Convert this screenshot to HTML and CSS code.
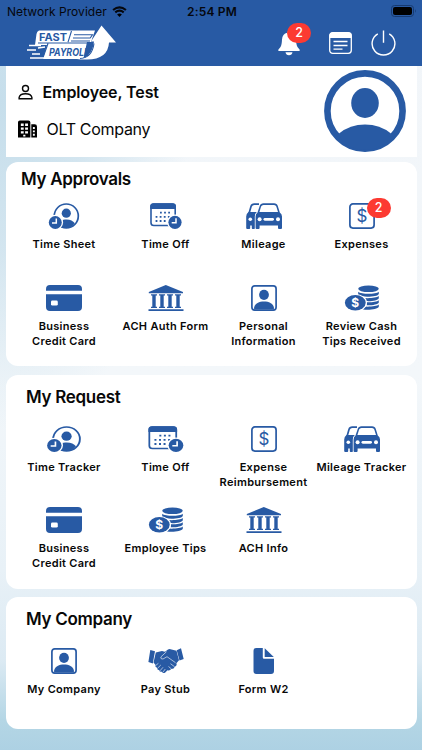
FILE: index.html
```html
<!DOCTYPE html>
<html lang="en">
<head>
  <meta charset="UTF-8">
  <meta name="viewport" content="width=device-width, initial-scale=1">
  <title>Fast Payroll</title>
  <link rel="stylesheet" href="styles.css">
</head>
<body>

  <!-- icon set -->
  <svg class="sprite" xmlns="http://www.w3.org/2000/svg">
    <symbol id="timesheet" viewBox="0 0 36 26" preserveAspectRatio="none">
      <circle cx="20.3" cy="13" r="12" fill="none" stroke="currentColor" stroke-width="1.7"/>
      <circle cx="20.3" cy="10.2" r="4.6"/>
      <path d="M11 24.5V21c2-3.400 5.500-4.500 9.500-4.500s6.500 1.300 8.300 3.800C27 23.500 24 25 20.300 25z"/>
      <circle cx="9.300" cy="19.500" r="7.800" fill="#fff"/>
      <circle cx="9.300" cy="19.500" r="6.500"/>
      <path d="M10.300 15.500v4.400H6" fill="none" stroke="#fff" stroke-width="1.500"/>
    </symbol>
    <symbol id="timeoff" viewBox="0 0 36 26" preserveAspectRatio="none">
      <rect x="3" y="1" width="24.200" height="21.500" rx="2.800" fill="#fff" stroke="currentColor" stroke-width="1.600"/>
      <path d="M2.200 6V3.500Q2.200.2 5.500.2h19Q28 .2 28 3.500V6z"/>
      <g stroke="currentColor" stroke-width="1.800" stroke-dasharray="1.800 2.300">
        <path d="M12 9.600h11M7.600 13.800h15.500M7.600 18h11"/>
      </g>
      <circle cx="27" cy="19.300" r="7.900" fill="#fff"/>
      <circle cx="27" cy="19.300" r="6.600"/>
      <path d="M28 15.300v4.400h-4.300" fill="none" stroke="#fff" stroke-width="1.500"/>
    </symbol>
    <symbol id="cars" viewBox="0 0 36 26">
      <path d="M3 10.500 5 3.500Q5.800 1.200 8.300 1.200H13" fill="none" stroke="currentColor" stroke-width="1.700"/>
      <path d="M2.500 9h9L9 13v12.200q0 .8-1 .8H6.600q-.8 0-.8-1v-2.500h-1.600V25q0 1-1 1H1.200q-1 0-1-1V13.500Q.2 10.500 2.500 9z"/>
      <circle cx="4.300" cy="16.200" r="1.800" fill="#fff"/>
      <path d="M11.500 9.500 13.700 3Q14.500.2 17.500.2H28q3 0 3.800 2.800l2 6.500q2.200 1.500 2.200 4V25q0 1-1 1h-2q-1 0-1-1v-2.500H13.600V25q0 1-1 1h-2q-1 0-1-1V13.500q0-2.500 1.900-4z" stroke="#fff" stroke-width="1.600" paint-order="stroke"/>
      <path d="M13.400 9l1.700-5.400Q15.700 2 17.500 2H28q1.800 0 2.300 1.600L32 9z" fill="#fff"/>
      <circle cx="13.600" cy="16.300" r="2" fill="#fff"/>
      <circle cx="32" cy="16.300" r="2" fill="#fff"/>
      <rect x="17.500" y="14.900" width="10.500" height="2.800" rx="1.400" fill="#fff"/>
    </symbol>
    <symbol id="expense" viewBox="0 0 36 26">
      <rect x="5.900" y=".9" width="24.200" height="24.200" rx="3" fill="none" stroke="currentColor" stroke-width="1.700"/>
      <text x="18" y="19" class="dollar">$</text>
    </symbol>
    <symbol id="creditcard" viewBox="0 0 36 26">
      <path d="M0 5.800V4Q0 0 4 0h28q4 0 4 4v1.800zM0 9.200h36V22q0 4-4 4H4q-4 0-4-4z"/>
      <rect x="5" y="15.600" width="6.800" height="5" rx="1.400" fill="#fff"/>
    </symbol>
    <symbol id="bank" viewBox="0 0 36 26">
      <path d="M17.800 0 35 7v1.300H.8V7zM3 9.200h6v1.300H7.700v11.300H9v1.300H3v-1.300h1.300V10.500H3zM11 9.200h6v1.300h-1.300v11.300H17v1.300h-6v-1.300h1.300V10.500H11zM19 9.200h6v1.300h-1.300v11.300H25v1.300h-6v-1.300h1.300V10.500H19zM27 9.200h6v1.300h-1.300v11.300H33v1.300h-6v-1.300h1.300V10.500H27zM.5 24.300h35V26H.5z"/>
    </symbol>
    <symbol id="person" viewBox="0 0 36 26">
      <rect x="5.900" y=".9" width="24.200" height="24.200" rx="2.800" fill="none" stroke="currentColor" stroke-width="1.700"/>
      <ellipse cx="18" cy="9.800" rx="4.900" ry="5.100"/>
      <path d="M8.100 24.500v-2c1-4.300 5-6 9.900-6s9 1.700 9.900 6v2z"/>
    </symbol>
    <symbol id="coins" viewBox="0 0 36 26">
      <ellipse cx="24.500" cy="3.800" rx="10.300" ry="3.300"/>
      <path d="M14.200 6.700c3 2.700 17.600 2.700 20.600 0V9c-1 3-17.500 4.200-20.600.6zM18 12.700c6 1 14.500.2 16.800-1.700v2.200c-1 2.200-7 3.300-12.800 2.900zM22.500 17.300c5 .2 10.500-.4 12.300-2v2.200c-1 2-6.500 3-12.300 2.800zM21 21.600c6 .3 12.200-.5 13.800-2.100v2.300c-1.200 2.600-9.800 3.600-15.800 2.700z"/>
      <ellipse cx="11.500" cy="17.700" rx="11.500" ry="8.800" fill="#fff"/>
      <ellipse cx="11.300" cy="17.700" rx="10.400" ry="7.700"/>
      <text x="11.300" y="22" class="coin">$</text>
    </symbol>
    <symbol id="hands" viewBox="0 0 36 26">
      <path d="M2.300 2 7 3.300 4.800 15.500.4 14zM28.700 2.300 33 .3l2.700 10.800-4.200 1.400z"/>
      <path d="M7.800 4.500 14 3l3 .8L20 1.500q1-.6 2.500-.3l6 1.500 2.500 9.600-2.600 2.900q1 2.300-1.600 3.500-.8 2.300-3.600 2.200-1.200 2-3.700 1.300l-2.500 2.500q-2 1-3.100-1-2.200.5-2.700-1.500-2.300-.3-2.100-2.500-2.300-.5-1.500-2.700l-2.100-2.400z"/>
      <path d="M18.500 3.700 12.800 9q-.2 2.500 2.200 2l4-2.300 8.500 6M7.700 17.500l2.700-2.200M9.600 20.200l3.200-3.200M12 22.800l3-3.500M15 24l2.300-3M20.500 18.500l3 2.500M22.500 15.700l4 3" fill="none" stroke="#fff" stroke-width=".6"/>
    </symbol>
    <symbol id="file" viewBox="0 0 36 26">
      <path d="M10.500 0h6.300v9.500q0 1.200 1.200 1.200h10V23q0 3-3 3H10.500q-3 0-3-3V3q0-3 3-3z"/>
      <path d="M18.700.3 27.800 9h-9.100z"/>
    </symbol>
  </svg>

  <header class="topbar">
    <div class="status">
      <div class="carrier">
        <span>Network Provider</span>
        <svg class="wifi" viewBox="0 0 16 12">
          <path d="M8 12 5.400 9.200q2.600-2 5.200 0z"/>
          <path d="M3.400 7q4.600-3.800 9.200 0M1 4.400q7-6 14 0" fill="none" stroke="#05070d" stroke-width="2.300"/>
        </svg>
      </div>
      <span class="clock">2:54 PM</span>
      <svg class="battery" viewBox="0 0 26 12">
        <rect x=".5" y=".5" width="22" height="11" rx="3" fill="none" stroke="#173a70"/>
        <rect x="2" y="2" width="19" height="8" rx="2"/>
        <path d="M24 4q1.600 2 0 4z" fill="#173a70"/>
      </svg>
    </div>

    <div class="toolbar">
      <svg class="logo" viewBox="0 0 90 36">
        <path fill="#fff" d="M12 5.500h56L64 17h-4l-3 14Q57 34 53 34H16l4-14H8l1.500-11Q10 6 12 5.500z"/>
        <path fill="#fff" d="M50 34.500q15-1 17-18h-3L74.500.5 89 17.500h-7Q81 34.500 60 34.500z"/>
        <path d="M44.500 6 41 17.200M11 18h54.500M21 18.500 15.500 34M67 18.500Q65 33 53 33.500" fill="none" stroke="#285aa4" stroke-width="1.100"/>
        <path d="M47 9.700h18.500l-2.300 3.300H46M44 16h19" fill="none" stroke="#285aa4" stroke-width="1.100"/>
        <path d="M2 20.500h12M0 25h9M5 29h8M3 33h14M11 23l7-1" fill="none" stroke="#fff" stroke-width="1.500"/>
        <text x="12" y="15.500" textLength="28" lengthAdjust="spacingAndGlyphs" class="logo-text">FAST</text>
        <text x="22" y="30.500" textLength="40" lengthAdjust="spacingAndGlyphs" class="logo-text slanted">PAYROLL</text>
      </svg>
      <div class="actions">
        <div class="bell">
          <svg viewBox="0 0 22 26">
            <path d="M11 1q1.700 0 1.700 1.800 5 1.200 5.300 6.700.2 5.500 1.500 7.500l2.200 2.700q.5 1.300-.8 1.300H1.100Q-.2 21 .3 19.700L2.500 17Q3.800 15 4 9.500 4.300 4 9.300 2.800 9.300 1 11 1zM7.500 22.300h7Q14 25.300 11 25.300T7.500 22.300z" fill="#fff"/>
          </svg>
          <span class="badge">2</span>
        </div>
        <svg class="news" viewBox="0 0 23 22">
          <rect x=".7" y=".7" width="21.600" height="20.600" rx="3" fill="none" stroke="#fff" stroke-width="1.300"/>
          <path d="M.5 6V3.500Q.5.5 3.500.5h16q3 0 3 3V6z" fill="#fff"/>
          <path d="M4.500 9.500h14M4.500 13.500h14M4.500 17.200h9" stroke="#fff" stroke-width="1.300"/>
        </svg>
        <svg class="power" viewBox="0 0 25 26">
          <path d="M12.500.5v12.300M6.800 3.800a11.400 11.400 0 1 0 11.400 0" fill="none" stroke="#fff" stroke-width="1.400"/>
        </svg>
      </div>
    </div>
  </header>

  <main>
    <section class="profile">
      <div class="who">
        <div class="name">
          <svg viewBox="0 0 16 16"><circle cx="8" cy="4.300" r="3.200"/><path d="M1.200 15.200v-1.400q.8-4 6.800-4t6.800 4v1.400z"/></svg>
          <b>Employee, Test</b>
        </div>
        <div class="company">
          <svg viewBox="0 0 20 18">
            <path d="M0 18V2q0-2 2-2h9q2 0 2 2v16zM14 4h3.500Q20 4 20 6.500V18h-6z"/>
            <path d="M3 3.300h3v2.500H3zM7.500 3.300h3v2.500h-3zM3 7.300h3v2.500H3zM7.500 7.300h3v2.500h-3zM3 11.300h3v2.500H3zM7.500 11.300h3v2.500h-3zM5.500 15h2.300v2H5.500zM15.700 7h2v2h-2zM15.700 10.500h2v2h-2zM15.700 14h2v2h-2z" fill="#fff"/>
          </svg>
          <span>OLT Company</span>
        </div>
      </div>
      <svg class="avatar" viewBox="0 0 82 82">
        <circle cx="41" cy="41" r="37.600" fill="none" stroke="#285aa4" stroke-width="6.600"/>
        <ellipse cx="41" cy="33" rx="13.800" ry="15"/>
        <path d="M15 63.500q11-9 26-9t26 9L62 73q-10 7-21 7T19 73z"/>
      </svg>
    </section>

    <section class="card approvals">
      <h2>My Approvals</h2>
      <div class="grid">
        <div class="item"><svg><use href="#timesheet"/></svg><p>Time Sheet</p></div>
        <div class="item"><svg><use href="#timeoff"/></svg><p>Time Off</p></div>
        <div class="item"><svg><use href="#cars"/></svg><p>Mileage</p></div>
        <div class="item"><svg><use href="#expense"/></svg><span class="badge">2</span><p>Expenses</p></div>
        <div class="item"><svg><use href="#creditcard"/></svg><p>Business<br>Credit Card</p></div>
        <div class="item"><svg><use href="#bank"/></svg><p>ACH Auth Form</p></div>
        <div class="item"><svg><use href="#person"/></svg><p>Personal<br>Information</p></div>
        <div class="item"><svg><use href="#coins"/></svg><p>Review Cash<br>Tips Received</p></div>
      </div>
    </section>

    <section class="card request">
      <h2>My Request</h2>
      <div class="grid">
        <div class="item"><svg class="wide"><use href="#timesheet"/></svg><p>Time Tracker</p></div>
        <div class="item"><svg class="wide"><use href="#timeoff"/></svg><p>Time Off</p></div>
        <div class="item"><svg><use href="#expense"/></svg><p>Expense<br>Reimbursement</p></div>
        <div class="item"><svg><use href="#cars"/></svg><p>Mileage Tracker</p></div>
        <div class="item"><svg><use href="#creditcard"/></svg><p>Business<br>Credit Card</p></div>
        <div class="item"><svg><use href="#coins"/></svg><p>Employee Tips</p></div>
        <div class="item"><svg><use href="#bank"/></svg><p>ACH Info</p></div>
      </div>
    </section>

    <section class="card my-company">
      <h2>My Company</h2>
      <div class="grid">
        <div class="item"><svg><use href="#person"/></svg><p>My Company</p></div>
        <div class="item"><svg><use href="#hands"/></svg><p>Pay Stub</p></div>
        <div class="item"><svg><use href="#file"/></svg><p>Form W2</p></div>
      </div>
    </section>
  </main>

</body>
</html>
```
FILE: styles.css
```css
* {
  box-sizing: border-box;
}
body {
  margin: 0;
  height: 750px;
  overflow: hidden;
  font-family: Inter, "Liberation Sans", sans-serif;
  color: #080808;
  background:
    radial-gradient(ellipse 190px 330px at 0 100px, #c6deeb 0%, rgba(198,222,235,0.7) 45%, rgba(198,222,235,0) 100%),
    linear-gradient(180deg, #f1f5f9 0%, #f3f7fa 50%, #e8f1f7 76%, #dceaf3 88%, #b4d6e5 96%, #add1e3 100%);
}
.sprite {
  display: none;
}
svg {
  display: block;
  flex: none;
}
.topbar {
  height: 65.5px;
  background: #285aa4;
}
.status {
  height: 22px;
  display: grid;
  grid-template-columns: 1fr auto 1fr;
  align-items: center;
  padding: 0 5px 0 7px;
  font-size: 12px;
  color: #05070d;
}
.carrier {
  display: flex;
  align-items: center;
  gap: 5px;
  letter-spacing: 0.05px;
}
.wifi {
  width: 15px;
  height: 11px;
}
.clock {
  font-weight: 600;
  letter-spacing: 0.2px;
}
.battery {
  width: 26px;
  height: 12px;
  justify-self: end;
}
.toolbar {
  display: flex;
  justify-content: space-between;
  padding: 2px 26px 0 27px;
}
.logo {
  width: 90px;
  height: 36px;
  margin-top: 1px;
}
.logo-text {
  font-family: Inter, sans-serif;
  font-size: 10.5px;
  font-weight: 700;
  fill: #285aa4;
}
.slanted {
  font-style: italic;
}
.actions {
  display: flex;
  align-items: center;
  gap: 19px;
}
.bell {
  position: relative;
  margin-right: 10px;
}
.bell svg {
  width: 22px;
  height: 26px;
}
.news {
  width: 23px;
  height: 22px;
}
.power {
  width: 25px;
  height: 26px;
}
.badge {
  position: absolute;
  width: 24px;
  height: 20px;
  border-radius: 10px;
  background: #fc3a32;
  color: #fff;
  font-size: 12.5px;
  font-weight: 500;
  line-height: 19px;
  text-align: center;
}
.bell .badge {
  left: 9px;
  top: -7px;
}
main {
  padding: 0 5.5px;
}
.profile {
  display: flex;
  justify-content: space-between;
  height: 91.5px;
  padding: 4.5px 10.5px 0 12px;
  background: #fff;
}
.name, .company {
  display: flex;
  align-items: center;
  height: 20px;
  gap: 10px;
  font-size: 16px;
}
.name {
  margin-top: 11.5px;
}
.name b {
  font-weight: 600;
  letter-spacing: -0.1px;
}
.name svg {
  width: 15px;
  height: 16px;
  fill: none;
  stroke: #080808;
  stroke-width: 1.5;
}
.company {
  margin-top: 17px;
  letter-spacing: -0.3px;
}
.company svg {
  width: 19px;
  height: 18px;
}
.avatar {
  width: 82px;
  height: 82px;
  fill: #285aa4;
}
.card {
  background: #fff;
  border-radius: 12px;
}
.approvals {
  height: 204px;
  margin-top: 5px;
  padding-top: 6px;
}
.request {
  height: 214px;
  margin-top: 8.5px;
  padding-top: 11px;
}
.my-company {
  height: 132px;
  margin-top: 8.5px;
  padding-top: 11px;
}
h2 {
  margin: 0 0 0 20.5px;
  height: 22px;
  line-height: 22px;
  font-size: 17px;
  font-weight: 600;
  letter-spacing: -0.3px;
}
.approvals h2 {
  margin-left: 15.5px;
}
.grid {
  display: grid;
  grid-template-columns: 105px 98px 98px 98px;
  grid-auto-rows: 81.5px;
  padding: 18px 0 0 6px;
}
.approvals .grid {
  padding-top: 13px;
}
.item {
  position: relative;
  display: flex;
  flex-direction: column;
  align-items: center;
}
.item svg {
  width: 36px;
  height: 26px;
  color: #285aa4;
  fill: #285aa4;
}
.item .wide {
  width: 40px;
}
.item p {
  margin: 8px 0 0;
  font-size: 11px;
  font-weight: 600;
  line-height: 15.3px;
  letter-spacing: 0.3px;
  text-align: center;
  white-space: nowrap;
}
.item .badge {
  left: 54px;
  top: -5px;
}
.dollar, .coin {
  font-family: Inter, sans-serif;
  font-size: 17px;
  text-anchor: middle;
}
.coin {
  font-size: 12px;
  font-weight: 700;
  fill: #fff;
}
```
